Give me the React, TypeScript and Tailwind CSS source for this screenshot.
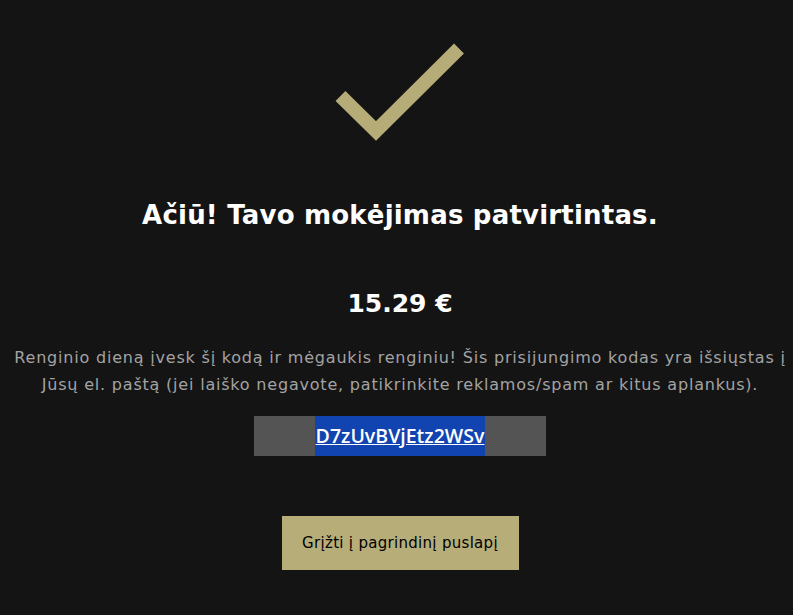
import React from 'react';

const App = () => {
  return (
    <div className="min-h-[615px] w-full bg-[#141414] font-['DejaVu_Sans',sans-serif] flex flex-col items-center pt-[38px] pl-[7px]">
      {/* checkmark */}
      <svg width="160" height="110" viewBox="0 0 160 110">
        <path d="M20.5 58 L56 93 L139 10.5" fill="none" stroke="#b6ac77" strokeWidth="14" strokeLinejoin="miter" strokeLinecap="butt" />
      </svg>

      <h1 className="mt-[49px] text-[26px] leading-[36px] font-bold tracking-[0.2px] text-white">
        Ačiū! Tavo mokėjimas patvirtintas.
      </h1>

      <div className="mt-[53px] text-[25px] leading-[36px] font-bold text-white">15.29 €</div>

      <p className="mt-[22px] text-center text-[16px] leading-[27px] tracking-[0.8px] text-[#a3a3a3] whitespace-nowrap">
        Renginio dieną įvesk šį kodą ir mėgaukis renginiu! Šis prisijungimo kodas yra išsiųstas į
        <br />
        Jūsų el. paštą (jei laiško negavote, patikrinkite reklamos/spam ar kitus aplankus).
      </p>

      <div className="mt-[18px] w-[292px] h-[40px] bg-[#545454] flex items-center justify-center">
        <a href="#" className="bg-[#1144b0] text-white underline font-['Open_Sans',sans-serif] font-semibold text-[19.5px] leading-[40px] px-[1px]">
          D7zUvBVjEtz2WSv
        </a>
      </div>

      <button className="mt-[60px] w-[237px] h-[54px] bg-[#b7ad78] text-black text-[15px] tracking-[0.3px]">
        Grįžti į pagrindinį puslapį
      </button>
    </div>
  );
};

export default App;
